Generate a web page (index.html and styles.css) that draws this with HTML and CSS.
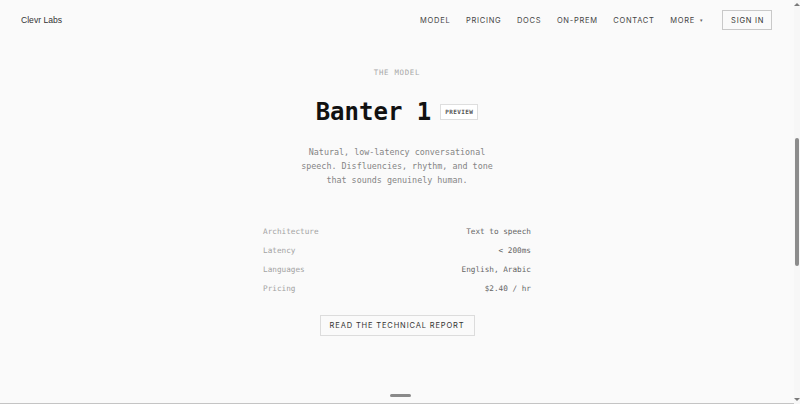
FILE: index.html
```html
<!DOCTYPE html>
<html lang="en">
<head>
<meta charset="utf-8">
<title>Clevr Labs — Banter 1</title>
<link rel="stylesheet" href="styles.css">
</head>
<body>
<header class="topbar">
  <div class="brand">Clevr Labs</div>
  <nav class="nav">
    <a class="nav-link" href="#">MODEL</a>
    <a class="nav-link" href="#">PRICING</a>
    <a class="nav-link" href="#">DOCS</a>
    <a class="nav-link" href="#">ON-PREM</a>
    <a class="nav-link" href="#">CONTACT</a>
    <a class="nav-link more" href="#">MORE <span class="caret">&#9662;</span></a>
    <a class="signin" href="#">SIGN IN</a>
  </nav>
</header>
<main>
  <section class="hero">
    <div class="eyebrow">THE MODEL</div>
    <div class="title-row">
      <h1 class="title">Banter 1</h1>
      <span class="badge">PREVIEW</span>
    </div>
    <p class="lede">Natural, low-latency conversational speech. Disfluencies, rhythm, and tone that sounds genuinely human.</p>
    <dl class="specs">
      <div class="spec"><dt>Architecture</dt><dd>Text to speech</dd></div>
      <div class="spec"><dt>Latency</dt><dd>&lt; 200ms</dd></div>
      <div class="spec"><dt>Languages</dt><dd>English, Arabic</dd></div>
      <div class="spec"><dt>Pricing</dt><dd>$2.40 / hr</dd></div>
    </dl>
    <a class="report" href="#">READ THE TECHNICAL REPORT</a>
    <span class="scroll-pill"></span>
  </section>
  <section class="next"></section>
</main>
<div class="scrollbar" aria-hidden="true">
  <span class="arrow up"></span>
  <span class="thumb"></span>
  <span class="arrow down"></span>
</div>
</body>
</html>
```

FILE: styles.css
```css
* { box-sizing: border-box; }
html, body { margin: 0; padding: 0; }
body {
  background: #fafafa;
  color: #222;
  font-family: "Inter", "Liberation Sans", sans-serif;
  padding-right: 6px;
}
a { text-decoration: none; color: inherit; }

.topbar {
  height: 40px;
  display: flex;
  align-items: center;
  justify-content: space-between;
  padding: 0 22px 0 21px;
}
.brand {
  font-family: "Liberation Sans", Arial, sans-serif;
  font-size: 8.6px;
  color: #333;
}
.nav {
  display: flex;
  align-items: center;
  gap: 15.6px;
}
.nav-link {
  font-size: 7.5px;
  letter-spacing: 0.72px;
  color: #444;
}
.caret { font-size: 5px; color: #666; margin-left: 2px; vertical-align: 1px; }
.more { margin-right: 3px; }
.signin {
  font-size: 7.5px;
  letter-spacing: 0.72px;
  color: #333;
  border: 1px solid #c9c9c9;
  height: 20px;
  padding: 0 7px 0 8px;
  display: flex;
  align-items: center;
}

.hero {
  position: relative;
  height: 364px;
  border-bottom: 1px solid #c4c4c4;
  display: flex;
  flex-direction: column;
  align-items: center;
  font-family: "DejaVu Sans Mono", "Liberation Mono", monospace;
}
.eyebrow {
  margin-top: 27px;
  font-size: 7.4px;
  line-height: 12px;
  letter-spacing: 0.7px;
  color: #a8a8a8;
}
.title-row {
  margin-top: 18px;
  display: flex;
  align-items: center;
  gap: 9px;
}
.title {
  margin: 0;
  font-size: 24px;
  line-height: 30px;
  font-weight: bold;
  color: #111;
}
.badge {
  font-size: 6px;
  font-weight: bold;
  letter-spacing: 0.4px;
  color: #555;
  background: #fff;
  border: 1px solid #dedede;
  padding: 3px 4px;
  line-height: 8px;
}
.lede {
  margin: 18px 0 0;
  max-width: 39ch;
  font-size: 8.4px;
  line-height: 14px;
  text-align: center;
  color: #858585;
}
.specs {
  margin: 35px 0 0;
  width: 268px;
  font-size: 7.7px;
}
.spec {
  display: flex;
  justify-content: space-between;
  height: 19px;
  align-items: center;
}
.spec dt { color: #a3a3a3; }
.spec dd { margin: 0; color: #666; }
.report {
  margin-top: 17px;
  height: 21px;
  width: 155px;
  display: flex;
  align-items: center;
  justify-content: center;
  border: 1px solid #dcdcdc;
  font-family: "Inter", "Liberation Sans", sans-serif;
  font-size: 7.5px;
  letter-spacing: 0.85px;
  color: #333;
}
.scroll-pill {
  position: absolute;
  bottom: 6px;
  left: 50%;
  margin-left: -7px;
  width: 21px;
  height: 3px;
  border-radius: 2px;
  background: #8a8a8a;
}
.next { height: 700px; }

.scrollbar {
  position: fixed;
  top: 0;
  right: 0;
  bottom: 0;
  width: 6px;
  background: #f7f7f7;
}
.arrow {
  position: absolute;
  left: 0;
  width: 0;
  height: 0;
  border-left: 3px solid transparent;
  border-right: 3px solid transparent;
}
.arrow.up { top: 3px; border-bottom: 3px solid #7a7a7a; }
.arrow.down { bottom: 3px; border-top: 3px solid #7a7a7a; }
.thumb {
  position: absolute;
  top: 138px;
  left: 1px;
  width: 4px;
  height: 128px;
  border-radius: 2px;
  background: #8c8c8c;
}
```
